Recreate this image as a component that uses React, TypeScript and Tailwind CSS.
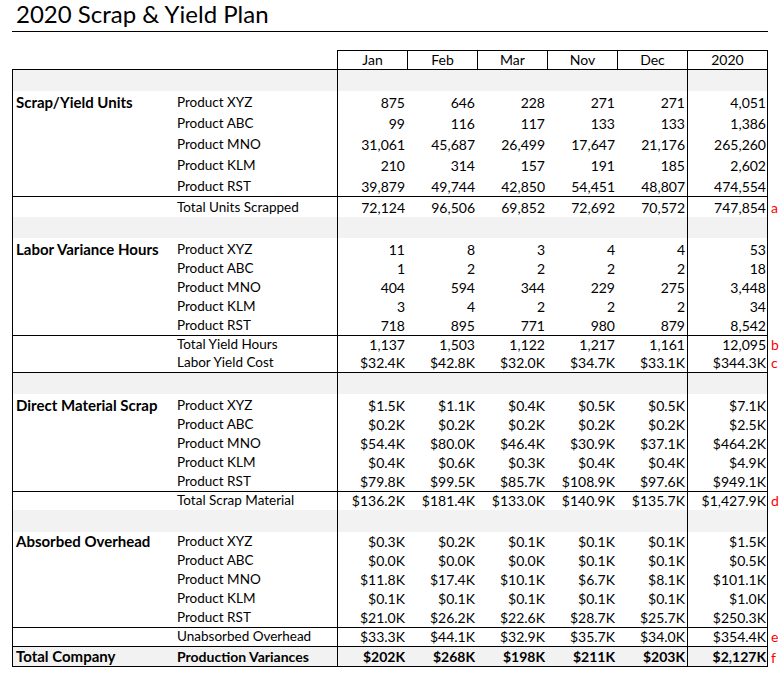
import { clsx } from 'clsx'

interface RowDef {
  section?: string
  label?: string
  values?: string[]
  h: string
  top?: boolean
  bottom?: boolean
  grey?: boolean
  bold?: boolean
  note?: string
}

const MONTHS = ['Jan', 'Feb', 'Mar', 'Nov', 'Dec']

const ROWS: RowDef[] = [
  { h: 'h-[22px]', top: true, grey: true },
  { section: 'Scrap/Yield Units', label: 'Product XYZ', values: ['875', '646', '228', '271', '271', '4,051'], h: 'h-[21px]' },
  { label: 'Product ABC', values: ['99', '116', '117', '133', '133', '1,386'], h: 'h-[21px]' },
  { label: 'Product MNO', values: ['31,061', '45,687', '26,499', '17,647', '21,176', '265,260'], h: 'h-[21px]' },
  { label: 'Product KLM', values: ['210', '314', '157', '191', '185', '2,602'], h: 'h-[21px]' },
  { label: 'Product RST', values: ['39,879', '49,744', '42,850', '54,451', '48,807', '474,554'], h: 'h-[21px]' },
  { label: 'Total Units Scrapped', values: ['72,124', '96,506', '69,852', '72,692', '70,572', '747,854'], h: 'h-[21px]', top: true, note: 'a' },
  { h: 'h-[21px]', grey: true },
  { section: 'Labor Variance Hours', label: 'Product XYZ', values: ['11', '8', '3', '4', '4', '53'], h: 'h-[21px]' },
  { label: 'Product ABC', values: ['1', '2', '2', '2', '2', '18'], h: 'h-[19px]' },
  { label: 'Product MNO', values: ['404', '594', '344', '229', '275', '3,448'], h: 'h-[19px]' },
  { label: 'Product KLM', values: ['3', '4', '2', '2', '2', '34'], h: 'h-[19px]' },
  { label: 'Product RST', values: ['718', '895', '771', '980', '879', '8,542'], h: 'h-[19px]' },
  { label: 'Total Yield Hours', values: ['1,137', '1,503', '1,122', '1,217', '1,161', '12,095'], h: 'h-[19px]', top: true, note: 'b' },
  { label: 'Labor Yield Cost', values: ['$32.4K', '$42.8K', '$32.0K', '$34.7K', '$33.1K', '$344.3K'], h: 'h-[18px]', note: 'c' },
  { h: 'h-[22px]', top: true, grey: true },
  { section: 'Direct Material Scrap', label: 'Product XYZ', values: ['$1.5K', '$1.1K', '$0.4K', '$0.5K', '$0.5K', '$7.1K'], h: 'h-[21px]' },
  { label: 'Product ABC', values: ['$0.2K', '$0.2K', '$0.2K', '$0.2K', '$0.2K', '$2.5K'], h: 'h-[19px]' },
  { label: 'Product MNO', values: ['$54.4K', '$80.0K', '$46.4K', '$30.9K', '$37.1K', '$464.2K'], h: 'h-[19px]' },
  { label: 'Product KLM', values: ['$0.4K', '$0.6K', '$0.3K', '$0.4K', '$0.4K', '$4.9K'], h: 'h-[19px]' },
  { label: 'Product RST', values: ['$79.8K', '$99.5K', '$85.7K', '$108.9K', '$97.6K', '$949.1K'], h: 'h-[19px]' },
  { label: 'Total Scrap Material', values: ['$136.2K', '$181.4K', '$133.0K', '$140.9K', '$135.7K', '$1,427.9K'], h: 'h-[19px]', top: true, note: 'd' },
  { h: 'h-[22px]', grey: true },
  { section: 'Absorbed Overhead', label: 'Product XYZ', values: ['$0.3K', '$0.2K', '$0.1K', '$0.1K', '$0.1K', '$1.5K'], h: 'h-[19px]' },
  { label: 'Product ABC', values: ['$0.0K', '$0.0K', '$0.0K', '$0.1K', '$0.1K', '$0.5K'], h: 'h-[19px]' },
  { label: 'Product MNO', values: ['$11.8K', '$17.4K', '$10.1K', '$6.7K', '$8.1K', '$101.1K'], h: 'h-[19px]' },
  { label: 'Product KLM', values: ['$0.1K', '$0.1K', '$0.1K', '$0.1K', '$0.1K', '$1.0K'], h: 'h-[19px]' },
  { label: 'Product RST', values: ['$21.0K', '$26.2K', '$22.6K', '$28.7K', '$25.7K', '$250.3K'], h: 'h-[19px]' },
  { label: 'Unabsorbed Overhead', values: ['$33.3K', '$44.1K', '$32.9K', '$35.7K', '$34.0K', '$354.4K'], h: 'h-[19px]', top: true, note: 'e' },
  { section: 'Total Company', label: 'Production Variances', values: ['$202K', '$268K', '$198K', '$211K', '$203K', '$2,127K'], h: 'h-[21px]', top: true, bottom: true, grey: true, bold: true, note: 'f' },
]

function Row({ row }: { row: RowDef }) {
  const v = row.values ?? []
  return (
    <div className={clsx('flex', row.h)}>
      <div
        className={clsx(
          'flex w-[756px] border-l border-r border-black',
          row.top && 'border-t',
          row.bottom && 'border-b',
          row.grey && 'bg-[#f2f2f2]',
          row.bold && 'font-bold'
        )}
      >
        <div className="w-[164px] flex items-end pl-[3px] pb-[1px] font-bold text-[15px]">{row.section}</div>
        <div className={clsx('w-[160px] flex items-end pb-[1px]', row.bold ? 'text-[14px]' : 'text-[13.5px]')}>{row.label}</div>
        <div className="w-[70px] border-l border-black flex items-end justify-end pr-[2px] pb-[1px]">{v[0]}</div>
        <div className="w-[70px] flex items-end justify-end pr-[2px] pb-[1px]">{v[1]}</div>
        <div className="w-[70px] flex items-end justify-end pr-[2px] pb-[1px]">{v[2]}</div>
        <div className="w-[70px] flex items-end justify-end pr-[2px] pb-[1px]">{v[3]}</div>
        <div className="w-[70px] flex items-end justify-end pr-[2px] pb-[1px]">{v[4]}</div>
        <div className="w-[80px] border-l border-black flex items-end justify-end pr-[1px] pb-[1px]">{v[5]}</div>
      </div>
      <div className="flex items-end pl-[3px] pb-[1px] text-[#ff0000] font-normal">{row.note}</div>
    </div>
  )
}

export default function App() {
  return (
    <div className="w-[783px] h-[674px] bg-white text-black overflow-hidden font-['Lato',sans-serif] text-[14px] leading-[17px]">
      {/* Title */}
      <div className="ml-[12px] w-[756px] h-[32px] border-b border-black flex items-end pl-[4px] pb-[3px]">
        <h1 className="text-[24px] leading-[28px]">2020 Scrap &amp; Yield Plan</h1>
      </div>

      {/* Month header */}
      <div className="flex mt-[18px] h-[19px]">
        <div className="w-[337px]" />
        {MONTHS.map((m) => (
          <div key={m} className="w-[70px] border-l border-t border-black flex items-end justify-center pb-[1px]">
            {m}
          </div>
        ))}
        <div className="w-[81px] border-l border-r border-t border-black flex items-end justify-center pb-[1px]">2020</div>
      </div>

      {/* Table body */}
      <div className="ml-[12px]">
        {ROWS.map((r, i) => (
          <Row key={i} row={r} />
        ))}
      </div>
    </div>
  )
}
